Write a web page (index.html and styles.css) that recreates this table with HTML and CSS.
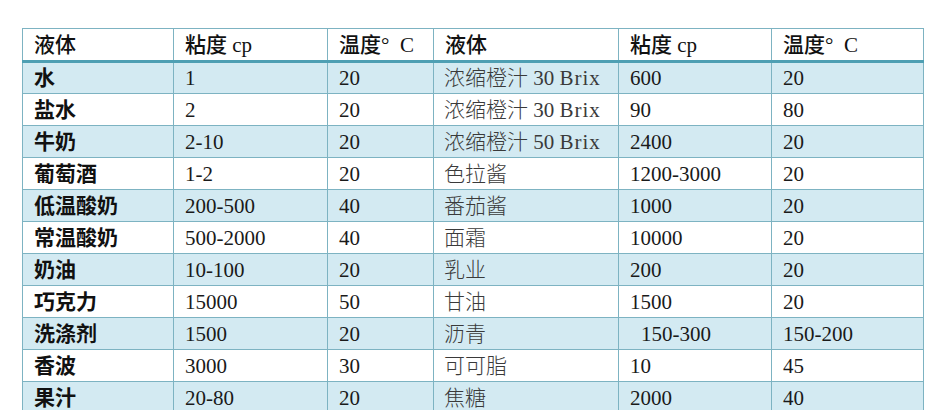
FILE: index.html
```html
<!DOCTYPE html>
<html lang="zh">
<head>
<meta charset="utf-8">
<link rel="stylesheet" href="styles.css">
</head>
<body>
<table class="visc">
  <colgroup>
    <col class="c1"><col class="c2"><col class="c3"><col class="c4"><col class="c5"><col class="c6">
  </colgroup>
  <thead>
    <tr><th>液体</th><th>粘度 cp</th><th>温度°&nbsp;&nbsp;C</th><th>液体</th><th>粘度 cp</th><th>温度°&nbsp;&nbsp;C</th></tr>
  </thead>
  <tbody>
    <tr class="odd"><td class="name">水</td><td>1</td><td>20</td><td class="name2">浓缩橙汁 30 <span class="lat">Brix</span></td><td>600</td><td>20</td></tr>
    <tr><td class="name">盐水</td><td>2</td><td>20</td><td class="name2">浓缩橙汁 30 <span class="lat">Brix</span></td><td>90</td><td>80</td></tr>
    <tr class="odd"><td class="name">牛奶</td><td>2-10</td><td>20</td><td class="name2">浓缩橙汁 50 <span class="lat">Brix</span></td><td>2400</td><td>20</td></tr>
    <tr><td class="name">葡萄酒</td><td>1-2</td><td>20</td><td class="name2">色拉酱</td><td>1200-3000</td><td>20</td></tr>
    <tr class="odd"><td class="name">低温酸奶</td><td>200-500</td><td>40</td><td class="name2">番茄酱</td><td>1000</td><td>20</td></tr>
    <tr><td class="name">常温酸奶</td><td>500-2000</td><td>40</td><td class="name2">面霜</td><td>10000</td><td>20</td></tr>
    <tr class="odd"><td class="name">奶油</td><td>10-100</td><td>20</td><td class="name2">乳业</td><td>200</td><td>20</td></tr>
    <tr><td class="name">巧克力</td><td>15000</td><td>50</td><td class="name2">甘油</td><td>1500</td><td>20</td></tr>
    <tr class="odd"><td class="name">洗涤剂</td><td>1500</td><td>20</td><td class="name2">沥青</td><td class="indent">150-300</td><td>150-200</td></tr>
    <tr><td class="name">香波</td><td>3000</td><td>30</td><td class="name2">可可脂</td><td>10</td><td>45</td></tr>
    <tr class="odd"><td class="name">果汁</td><td>20-80</td><td>20</td><td class="name2">焦糖</td><td>2000</td><td>40</td></tr>
  </tbody>
</table>
</body>
</html>
```
FILE: styles.css
```css
html, body {
  margin: 0;
  padding: 0;
  background: #ffffff;
}
body {
  padding: 28px 0 0 22px;
  font-family: "Liberation Serif", "Noto Sans CJK SC", serif;
  color: #1a1a1a;
}
.visc {
  border-collapse: collapse;
  table-layout: fixed;
  width: 901px;
  font-size: 21px;
}
.c1 { width: 151px; }
.c2 { width: 154px; }
.c3 { width: 106px; }
.c4 { width: 185px; }
.c5 { width: 153px; }
.c6 { width: 152px; }
.visc th, .visc td {
  border: 1px solid #7db3c2;
  height: 32px;
  padding: 0 0 0 11px;
  text-align: left;
  white-space: nowrap;
  box-sizing: border-box;
  line-height: 30px;
}
.visc th {
  height: 33px;
  font-weight: 500;
  border-bottom: 3px solid #4e9fb3;
  color: #111;
}
.visc tr.odd td {
  background: #d3eaf2;
}
.visc td.name {
  font-weight: 700;
  color: #111;
}
.visc td.name2 {
  color: #3a3a3a;
  font-weight: 300;
  padding-left: 10px;
}
.visc td.indent {
  padding-left: 22px;
}
.lat {
  letter-spacing: 1px;
}
```
